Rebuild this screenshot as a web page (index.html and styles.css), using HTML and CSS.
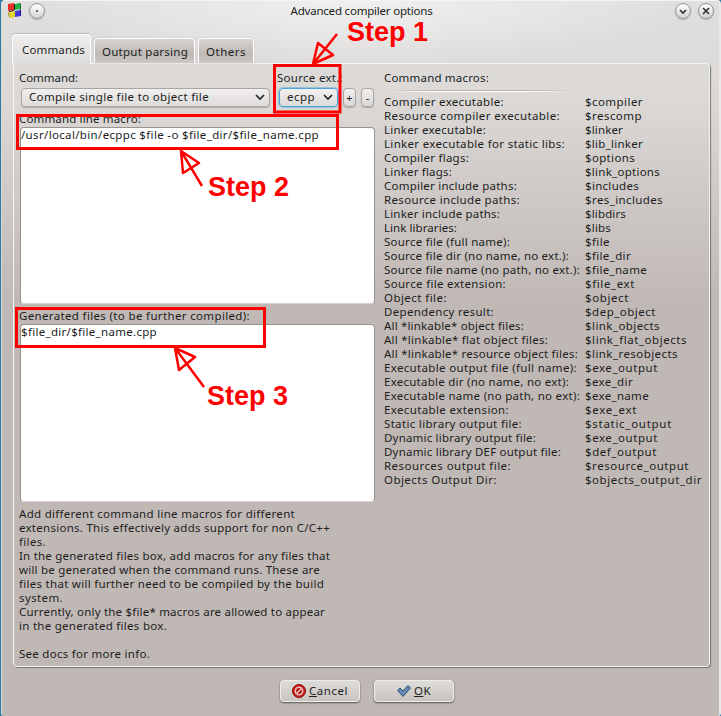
FILE: index.html
```html
<!DOCTYPE html>
<html lang="en">
<head>
<meta charset="utf-8">
<title>Advanced compiler options</title>
<link rel="stylesheet" href="styles.css">
</head>
<body>
<div class="window">
  <header class="titlebar">
    <svg class="app" width="16" height="16" viewBox="0 0 16 16">
      <path fill="#e8302c" d="M1 1l6-1v7l-6 1z"/><path fill="#22b045" d="M8 1l5-1v6l-5 1z"/><path fill="#087d25" d="M13 0l1 1v5l-1 1z"/>
      <path fill="#e6d52b" d="M2 9l6-1v6l-5 1z"/><path fill="#9f8d05" d="M2 9l1 6-1-1-1-4z"/><path fill="#4339d4" d="M8 8l6-1v6l-6 1z"/><path fill="#17108d" d="M13 7l1-1v6l-1 1z"/>
      <path stroke="#222" d="M7.5 1v6M2 8.5l5-1"/>
    </svg>
    <i class="round"><svg width="14" height="14"><circle cx="7" cy="7" r=".9" fill="#333"/></svg></i>
    <h1><span data-w="142">Advanced compiler options</span></h1>
    <i class="round down"><svg width="14" height="14"><path d="M4 6l3 3 3-3"/></svg></i>
    <i class="round"><svg width="14" height="14"><path d="M4 4l6 6M10 4l-6 6"/></svg></i>
  </header>
  <nav class="tabs">
    <div class="tab active"><span data-w="63">Commands</span></div>
    <div class="tab"><span data-w="86">Output parsing</span></div>
    <div class="tab"><span data-w="40">Others</span></div>
  </nav>
  <main class="panel">
    <section class="left">
      <div class="fields">
        <div class="field"><label data-w="59">Command:</label><div class="combo wide"><span data-w="180">Compile single file to object file</span><svg width="10" height="7"><path d="M1 1l4 4 4-4"/></svg></div></div>
        <div class="field"><label data-w="66">Source ext.:</label><div class="combo ext"><span data-w="28">ecpp</span><svg width="10" height="7"><path d="M1 1l4 4 4-4"/></svg></div></div>
        <div class="mini">+</div><div class="mini">-</div>
      </div>
      <label class="caption" data-w="122">Command line macro:</label>
      <div class="area"><span data-w="298">/usr/local/bin/ecppc $file -o $file_dir/$file_name.cpp</span></div>
      <label class="caption second" data-w="231">Generated files (to be further compiled):</label>
      <div class="area low"><span data-w="136">$file_dir/$file_name.cpp</span></div>
      <div class="help">
        <p><span data-w="276">Add different command line macros for different</span></p>
        <p><span data-w="311">extensions. This effectively adds support for non C/C++</span></p>
        <p><span data-w="27">files.</span></p>
        <p><span data-w="311">In the generated files box, add macros for any files that</span></p>
        <p><span data-w="301">will be generated when the command runs. These are</span></p>
        <p><span data-w="305">files that will further need to be compiled by the build</span></p>
        <p><span data-w="44">system.</span></p>
        <p><span data-w="306">Currently, only the $file* macros are allowed to appear</span></p>
        <p><span data-w="148">in the generated files box.</span></p>
        <p>&nbsp;</p>
        <p><span data-w="131">See docs for more info.</span></p>
      </div>
    </section>
    <section class="right">
      <h2><span data-w="105">Command macros:</span></h2>
      <hr>
      <div class="macros" id="macros"></div>
    </section>
  </main>
  <footer class="actions">
    <div class="button"><svg width="14" height="14"><circle cx="7" cy="7" r="6.5" fill="#c41a15" stroke="#8d0b09"/><circle cx="7" cy="7" r="3.7" fill="#b51612" stroke="#f0c5c1" stroke-width="1.500"/><path stroke="#f0c5c1" stroke-width="1.500" d="M4.500 9.500l5-5"/></svg><span data-w="39"><u>C</u>ancel</span></div>
    <div class="button"><svg width="14" height="12"><path d="M.5 5.500L3 3l3 3 5-5.500L13.500 3 6 11.500z" fill="#6289b5" stroke="#34516f"/></svg><span data-w="17"><u>O</u>K</span></div>
  </footer>
  <svg class="notes" width="721" height="716">
    <rect x="274.500" y="65.500" width="65.500" height="46.500"/><rect x="17.500" y="115.500" width="320" height="33"/><rect x="16.500" y="308.500" width="248" height="38"/>
    <path d="M337 34L313 64L318 43L333 55L313 64M202 186L181 151L199 163L183 173L181 151M204 387L175 348L195 357L179 370L175 348"/>
    <text x="347" y="41">Step 1</text><text x="208" y="196">Step 2</text><text x="207" y="405">Step 3</text>
  </svg>
</div>
<script src="script.js"></script>
</body>
</html>
```
FILE: styles.css
```css
* { box-sizing: border-box; }
body { margin: 0; width: 721px; height: 716px; overflow: hidden; background: #2d78a0; font: 11.5px/14px "Noto Sans", "Open Sans", sans-serif; color: #201e1d; }
.window { position: relative; width: 720px; height: 716px; margin-left: 1px; padding: 0 11px 0 12px; border-left: 1px solid #dedad8; border-right: 2px solid #eae8e7; border-top: 1px solid #f4f4f3; border-radius: 4px 4px 3px 3px; background: radial-gradient(ellipse 330px 68px at 50% 0, #f0f0ef, #efefee00), linear-gradient(#e0dfdd, #dbd8d6 100px, #c0b8b5 300px, #c0b8b5); }
[data-w] { display: inline-block; white-space: nowrap; }
.titlebar { display: flex; align-items: center; height: 20px; margin: 0 -6px 0 -7px; }
.app { margin: 0 7px 0 0; }
.round { flex: none; width: 16px; height: 16px; border: 1px solid #969390; border-radius: 50%; background: linear-gradient(#fff, #d5d3d1); box-shadow: 0 1px 1px #8887; display: block; margin-left: -1px; }
.round svg { display: block; } .round path { fill: none; stroke: #333; stroke-width: 1.7; }
.down { margin-right: 8px; }
h1 { flex: 1; margin: 0; padding-left: 2px; text-align: center; font-size: inherit; font-weight: 400; }
.tabs { display: flex; align-items: flex-end; gap: 3px; height: 42px; margin-left: -2px; position: relative; }
.tab { height: 25px; padding: 6px 6px 0 7px; border: 1px solid #fff; border-bottom: 0; border-radius: 4px 4px 0 0; background: linear-gradient(#d8d4d2, #bfb9b6 60%, #cbc7c5); box-shadow: 0 0 1px #777; }
.tab:nth-child(2) { width: 101px; } .tab:nth-child(3) { width: 56px; }
.tab.active { width: 79px; height: 30px; padding: 8px 5px 0 9px; background: linear-gradient(#eeeeec, #dfdddb); margin-bottom: -1px; z-index: 1; box-shadow: 0 -1px 1px #9998; }
.panel { display: flex; width: 697px; height: 604px; margin-left: -1px; padding: 7px 5px 0; border: 1px solid #f5f4f3; border-radius: 0 4px 4px 4px; box-shadow: 1px 1px 1px #777; }
.left { flex: none; width: 365px; }
.fields { display: flex; align-items: flex-end; height: 37px; padding-bottom: 1px; }
.field label { display: block; margin-bottom: 3px; }
.combo { display: flex; align-items: center; justify-content: space-between; height: 19px; border: 1px solid #aaa5a2; border-radius: 4px; background: linear-gradient(#f1f0ef, #dedbd9); box-shadow: 0 1px 1px #8888; padding: 0 4px 1px 7px; }
.combo svg { fill: none; stroke: #222; stroke-width: 1.7; }
.wide { width: 249px; margin: 0 7px 0 2px; }
.combo.ext { width: 59px; margin-left: 2px; border-color: #4ca7d9; box-shadow: 0 0 0 1px #6db4dc99; }
.field:nth-child(2) { width: 68px; }
.mini { width: 13px; height: 19px; margin-right: 5px; border: 1px solid #aaa5a2; border-radius: 4px; background: linear-gradient(#f1f0ef, #dad7d5); text-align: center; line-height: 17px; box-shadow: 0 1px 1px #8888; font-size: 11px; }
.field + .mini { margin-left: -2px; }
.caption { display: block !important; margin-top: 4px; height: 14px; }
.area { width: 355px; height: 177px; margin: 1px 0 0 1px; padding: 0; background: white; border: 1px solid #99938f; border-bottom-color: #d8d3d0; border-radius: 4px; }
.caption.second { margin-top: 5px; }
.area.low { height: 178px; }
.help { margin-top: 5px; }
.help p { margin: 0; height: 14px; }
.right { width: 322px; }
h2 { margin: 0; height: 14px; font-size: inherit; font-weight: 400; }
hr { width: 196px; height: 2px; border: 0; margin: 5px 0 3px; background: linear-gradient(90deg, #fff0, #b5afad 25%, #b5afad 70%, #fff0) 0 0/100% 1px no-repeat, linear-gradient(90deg, #fff0, #fff 25%, #fff 70%, #fff0) 0 1px/100% 1px no-repeat; }
.macros { display: grid; grid-template-columns: 201px auto; grid-auto-rows: 14px; }
.actions { display: flex; gap: 14px; margin: 13px 0 0 266px; }
.button { display: flex; align-items: center; justify-content: center; gap: 3px; width: 80px; height: 22px; border: 1px solid #eeedec; border-radius: 4px; background: linear-gradient(#dedcda, #c8c4bf); box-shadow: 0 1px 2px #555; }
.notes { position: absolute; left: -2px; top: -1px; }
.notes rect, .notes path { fill: none; stroke: #f00; stroke-width: 3; }
.notes path { stroke-width: 2.5; stroke-linejoin: round; }
.notes text { fill: #f00; font: bold 27px "Liberation Sans", sans-serif; }
```
FILE: script.js
```js
const macros = [
  ["Compiler executable:", 120, "$compiler", 58],
  ["Resource compiler executable:", 176, "$rescomp", 57],
  ["Linker executable:", 102, "$linker", 38],
  ["Linker executable for static libs:", 181, "$lib_linker", 58],
  ["Compiler flags:", 85, "$options", 50],
  ["Linker flags:", 68, "$link_options", 75],
  ["Compiler include paths:", 133, "$includes", 54],
  ["Resource include paths:", 136, "$res_includes", 78],
  ["Linker include paths:", 116, "$libdirs", 41],
  ["Link libraries:", 73, "$libs", 26],
  ["Source file (full name):", 126, "$file", 25],
  ["Source file dir (no name, no ext.):", 185, "$file_dir", 46],
  ["Source file name (no path, no ext.):", 196, "$file_name", 62],
  ["Source file extension:", 122, "$file_ext", 50],
  ["Object file:", 63, "$object", 44],
  ["Dependency result:", 110, "$dep_object", 71],
  ["All *linkable* object files:", 140, "$link_objects", 75],
  ["All *linkable* flat object files:", 164, "$link_flat_objects", 102],
  ["All *linkable* resource object files:", 194, "$link_resobjects", 93],
  ["Executable output file (full name):", 193, "$exe_output", 73],
  ["Executable dir (no name, no ext):", 185, "$exe_dir", 48],
  ["Executable name (no path, no ext):", 196, "$exe_name", 64],
  ["Executable extension:", 125, "$exe_ext", 52],
  ["Static library output file:", 138, "$static_output", 87],
  ["Dynamic library output file:", 152, "$exe_output", 73],
  ["Dynamic library DEF output file:", 177, "$def_output", 72],
  ["Resources output file:", 127, "$resource_output", 104],
  ["Objects Output Dir:", 113, "$objects_output_dir", 117]
];
const list = document.getElementById("macros");
for (const [name, nameWidth, value, valueWidth] of macros) {
  for (const [text, width] of [[name, nameWidth], [value, valueWidth]]) {
    const cell = document.createElement("div");
    const label = document.createElement("span");
    label.textContent = text;
    label.dataset.w = width;
    cell.append(label);
    list.append(cell);
  }
}
// Track each label so that it fills its nominal width.
for (const el of document.querySelectorAll("[data-w]")) {
  const range = document.createRange();
  range.selectNodeContents(el);
  const natural = range.getBoundingClientRect().width;
  el.style.letterSpacing = (el.dataset.w - natural) / el.textContent.length + "px";
}
```
